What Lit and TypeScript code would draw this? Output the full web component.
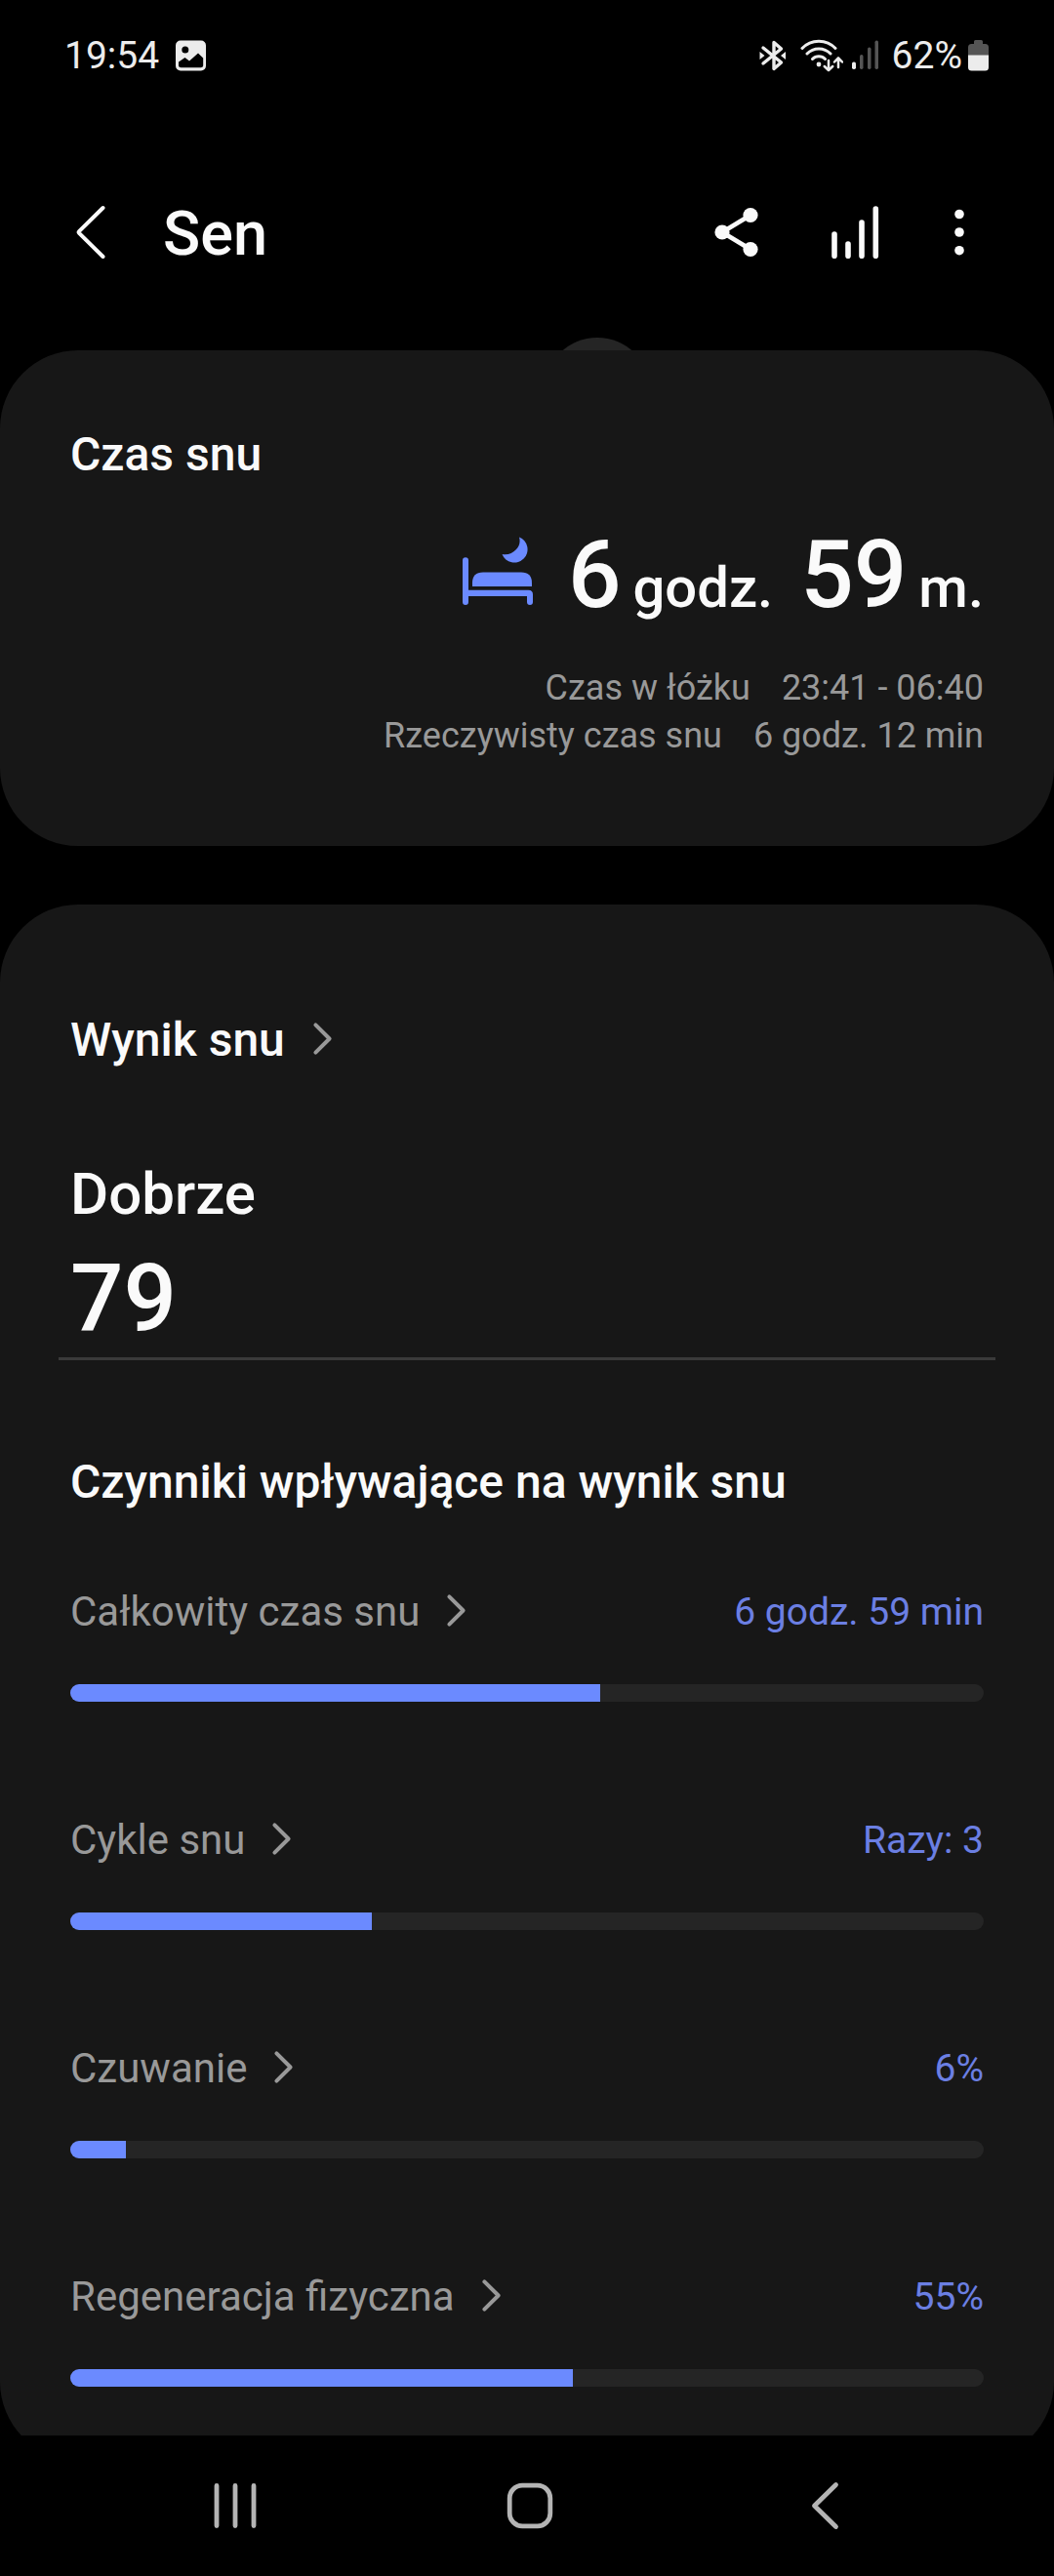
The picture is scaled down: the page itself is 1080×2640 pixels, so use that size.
import { LitElement, html, css, svg } from "lit";
import { customElement, property } from "lit/decorators.js";

interface Factor {
  label: string;
  value: string;
  percent: number;
}

const FACTORS: Factor[] = [
  { label: "Całkowity czas snu", value: "6 godz. 59 min", percent: 58 },
  { label: "Cykle snu", value: "Razy: 3", percent: 33 },
  { label: "Czuwanie", value: "6%", percent: 6.1 },
  { label: "Regeneracja fizyczna", value: "55%", percent: 55 },
];

const chevron = html`<svg class="chevron" width="22" height="40" viewBox="0 0 22 40" aria-hidden="true">
  <path d="M3.4 4.4 17.6 18.5 3.4 32.6" fill="none" stroke="#999" stroke-width="4" stroke-linecap="round" stroke-linejoin="round" />
</svg>`;

const reset = css`
  :host { display: block; font-family: Roboto, sans-serif; }
  * { box-sizing: border-box; }
  svg { display: block; flex: none; }
  button {
    display: flex; align-items: center; justify-content: center;
    padding: 0; border: 0; background: none; color: inherit; font: inherit; cursor: pointer;
  }
`;

@customElement("status-bar")
class StatusBar extends LitElement {
  static styles = [reset, css`
    .bar {
      display: flex; align-items: center; justify-content: space-between;
      padding: 33px 66px 0; color: #ececec; font-size: 39px; line-height: 48px;
    }
    .group { display: flex; align-items: center; }
    .left { gap: 17px; }
    .wifi { margin-left: 14px; }
    .signal { margin: 0 13px 0 9px; }
    .battery { margin-left: 6px; }
  `];

  render() {
    return html`<div class="bar">
      <div class="group left">
        <span>19:54</span>
        <svg width="32" height="32" viewBox="0 0 32 32" aria-label="Obraz">
          <path fill="#ececec" fill-rule="evenodd" d="M5 0.5h21a5 5 0 0 1 5 5v21a5 5 0 0 1-5 5H5a5 5 0 0 1-5-5v-21a5 5 0 0 1 5-5zM3 22.5v3a2.600 2.600 0 0 0 2.600 2.800h20a2.600 2.600 0 0 0 2.600-2.800v-7L23 13.500l-9 8-4.500-3.500zM9.800 6.500a3.500 3.500 0 1 0 0 7 3.500 3.500 0 0 0 0-7z" />
        </svg>
      </div>
      <div class="group">
        <svg width="28" height="32" viewBox="0 0 28 32" aria-label="Bluetooth">
          <path d="M4 8 22.500 23 15 29.500V2.500L22.500 9 4 24" fill="none" stroke="#ececec" stroke-width="3.400" stroke-linecap="round" stroke-linejoin="round" />
          <path d="M0.500 12 5.500 16 0.500 20zM27 12 22 16 27 20z" fill="#ececec" />
        </svg>
        <svg class="wifi" width="44" height="34" viewBox="0 0 44 34" aria-label="Wi-Fi">
          <g fill="none" stroke="#ececec" stroke-linecap="round" stroke-linejoin="round">
            <path d="M2 9.500C11-.3 27-.3 36 9.500M7 15c6.500-6.800 17.500-6.800 24 0M12.500 20.500c3.500-3.600 9.500-3.600 13 0" stroke-width="3" />
            <path d="M29 22v10m-4.200-4 4.200 4.200 4.200-4.200M39 29V19.500m-4 4 4-4.200 4 4.200" stroke-width="2.500" />
          </g>
          <circle cx="19" cy="26" r="2.400" fill="#ececec" />
        </svg>
        <svg class="signal" width="28" height="32" viewBox="0 0 28 32" aria-label="Sygnał">
          <g fill="#555">
            <rect x="8" y="15" width="3.500" height="15" rx="1.700" />
            <rect x="16" y="7.500" width="3.500" height="22.500" rx="1.700" />
            <rect x="23.500" y="0.500" width="3.500" height="29.500" rx="1.700" />
          </g>
          <rect x="0" y="22.500" width="4" height="7.500" rx="1.800" fill="#ececec" />
        </svg>
        <span>62%</span>
        <svg class="battery" width="22" height="32" viewBox="0 0 22 32" aria-label="Bateria">
          <path d="M6 1.500Q6 0 7.500 0h6Q15 0 15 1.500V4h2.500Q21 4 21 7.500V16H0V7.500Q0 4 3.500 4H6z" fill="#555" />
          <path d="M0 15.500h21V28q0 3.500-3.500 3.500h-14Q0 31.500 0 28z" fill="#ececec" />
        </svg>
      </div>
    </div>`;
  }
}

@customElement("app-header")
class AppHeader extends LitElement {
  static styles = [reset, css`
    .header {
      display: flex; align-items: center; height: 126px; margin-top: 94px;
      padding: 0 81px 0 63px; color: #fafafa;
    }
    .title {
      flex: 1; margin: 0; padding: 4px 0 0 44px;
      font-size: 63px; font-weight: 500; line-height: 76px;
    }
    .icon { width: 60px; height: 60px; }
    .actions { display: flex; gap: 61px; }
    .more { width: 32px; }
  `];

  render() {
    return html`<header class="header">
      <button class="icon" aria-label="Wstecz">
        <svg width="60" height="60" viewBox="0 0 60 60">
          <path d="M42.500 5 18 29.200Q17.300 30 18 30.800L42.500 55" fill="none" stroke="#fafafa" stroke-width="4" stroke-linecap="round" stroke-linejoin="round" />
        </svg>
      </button>
      <h1 class="title">Sen</h1>
      <div class="actions">
        <button class="icon" aria-label="Udostępnij">
          <svg width="60" height="60" viewBox="0 0 60 60">
            <path d="M44 12.500 15 30l29 17.500" fill="none" stroke="#fafafa" stroke-width="4.600" />
            <g fill="#fafafa">
              <circle cx="15" cy="30" r="7.600" />
              <circle cx="44" cy="12.500" r="7.600" />
              <circle cx="44" cy="47.500" r="7.600" />
            </g>
          </svg>
        </button>
        <button class="icon" aria-label="Wykres">
          <svg width="60" height="60" viewBox="0 0 60 60">
            <path d="M9 32v22.200M23 42v12.200M37 20v34.200M51.300 6v48.200" stroke="#fafafa" stroke-width="5.600" stroke-linecap="round" />
          </svg>
        </button>
        <button class="icon more" aria-label="Więcej opcji">
          <svg width="32" height="60" viewBox="0 0 32 60" fill="#fafafa">
            <circle cx="16" cy="11.500" r="4.800" />
            <circle cx="16" cy="30" r="4.800" />
            <circle cx="16" cy="48.700" r="4.800" />
          </svg>
        </button>
      </div>
    </header>`;
  }
}

@customElement("factor-row")
class FactorRow extends LitElement {
  @property({ attribute: false }) factor!: Factor;

  static styles = [reset, css`
    .head { display: flex; align-items: center; justify-content: space-between; line-height: 50px; }
    .label { gap: 27px; color: #999; font-size: 42px; }
    .value { color: #6b7fe3; font-size: 39px; }
    .track { height: 18px; margin-top: 49px; border-radius: 9px; background: #252525; overflow: hidden; }
    .fill { height: 100%; background: #6b8aff; }
  `];

  render() {
    const { label, value, percent } = this.factor;
    return html`
      <div class="head">
        <button class="label">${label}${chevron}</button>
        <span class="value">${value}</span>
      </div>
      <div class="track" role="progressbar" aria-label=${label} aria-valuenow=${percent} aria-valuemin="0" aria-valuemax="100">
        <div class="fill" style="width:${percent}%"></div>
      </div>`;
  }
}

@customElement("nav-bar")
class NavBar extends LitElement {
  static styles = [reset, css`
    .nav { display: grid; grid-template-columns: repeat(3, 1fr); height: 144px; padding: 0 84px 0 90px; background: #000; }
  `];

  private icon(label: string, shape: unknown) {
    return html`<button aria-label=${label}>
      <svg width="60" height="60" viewBox="0 0 60 60" fill="none" stroke="#b4b4b4" stroke-width="4.800" stroke-linecap="round" stroke-linejoin="round">${shape}</svg>
    </button>`;
  }

  render() {
    return html`<nav class="nav">
      ${this.icon("Ostatnie", svg`<path d="M11 9.500v41M30 9.500v41M49 9.500v41" />`)}
      ${this.icon("Ekran główny", svg`<rect x="9.200" y="9.200" width="41.600" height="41.600" rx="13" />`)}
      ${this.icon("Wstecz", svg`<path d="M41.500 8.500 19.500 30l22 21.500" />`)}
    </nav>`;
  }
}

@customElement("app-root")
class AppRoot extends LitElement {
  static styles = [reset, css`
    .screen { display: flex; flex-direction: column; height: 100vh; background: #000; color: #fafafa; }
    .content {
      flex: 1; min-height: 0; overflow-y: auto; scrollbar-width: none;
      display: flex; flex-direction: column; gap: 60px; padding-top: 58px;
    }
    .time { position: relative; z-index: 0; }
    .day {
      position: absolute; z-index: -1; top: -13px; left: calc(50% + 18px);
      width: 108px; height: 108px; border-radius: 50%; background: #252525;
    }
    .card { border-radius: 80px; background: #171717; padding: 79px 72px 88px; }
    .score { padding: 111px 72px 75px; }
    .title { margin: 0; font-size: 48px; font-weight: 500; line-height: 56px; }
    .link { gap: 28px; }
    .duration {
      display: flex; justify-content: flex-end; align-items: baseline;
      margin-top: 39px; font-weight: 500;
    }
    .bed { margin-right: 36px; }
    .number { font-size: 96px; font-weight: 500; line-height: 112px; }
    .unit { margin-left: 12px; font-size: 58px; line-height: 56px; }
    .unit + .number { margin-left: 28px; }
    .details { margin: 36px 0 0; color: #999; font-size: 36px; line-height: 49px; }
    .detail { display: flex; justify-content: flex-end; gap: 32px; }
    .detail dd { margin: 0; }
    .grade { margin: 94px 0 0; font-size: 60px; font-weight: 500; line-height: 72px; }
    .points { margin: 15px 0 0; }
    .divider { height: 3px; margin: 4px -12px 97px; border: 0; background: #3a3a3a; }
    .factors { display: flex; flex-direction: column; gap: 117px; margin-top: 80px; }
  `];

  render() {
    return html`<div class="screen">
      <status-bar></status-bar>
      <app-header></app-header>
      <main class="content">
        <div class="time">
          <div class="day"></div>
          <section class="card">
            <h2 class="title">Czas snu</h2>
            <div class="duration">
              <svg class="bed" width="72" height="72" viewBox="0 0 72 72" fill="#6b8aff" aria-hidden="true">
                <path d="M58 0.500A13.500 13.500 0 1 1 40.500 18Q49 19.500 55 13 60 7.500 58 0.500z" />
                <path d="M3 21.300a3 3 0 0 1 3 3V54.700h61.500q4.500 0 4.500 4.500V67a3 3 0 0 1-6 0v-6H6v6a3 3 0 0 1-6 0V24.300a3 3 0 0 1 3-3z" />
                <path d="M10 51v-3.500Q10 36.500 21 36.500h39Q71 36.500 71 47.500V51z" />
              </svg>
              <span class="number">6</span><span class="unit">godz.</span>
              <span class="number">59</span><span class="unit">m.</span>
            </div>
            <dl class="details">
              <div class="detail"><dt>Czas w łóżku</dt><dd>23:41 - 06:40</dd></div>
              <div class="detail"><dt>Rzeczywisty czas snu</dt><dd>6 godz. 12 min</dd></div>
            </dl>
          </section>
        </div>
        <section class="card score">
          <h2 class="title"><button class="link">Wynik snu${chevron}</button></h2>
          <p class="grade">Dobrze</p>
          <p class="number points">79</p>
          <hr class="divider" />
          <h3 class="title">Czynniki wpływające na wynik snu</h3>
          <div class="factors">
            ${FACTORS.map((f) => html`<factor-row .factor=${f}></factor-row>`)}
          </div>
        </section>
      </main>
      <nav-bar></nav-bar>
    </div>`;
  }
}
